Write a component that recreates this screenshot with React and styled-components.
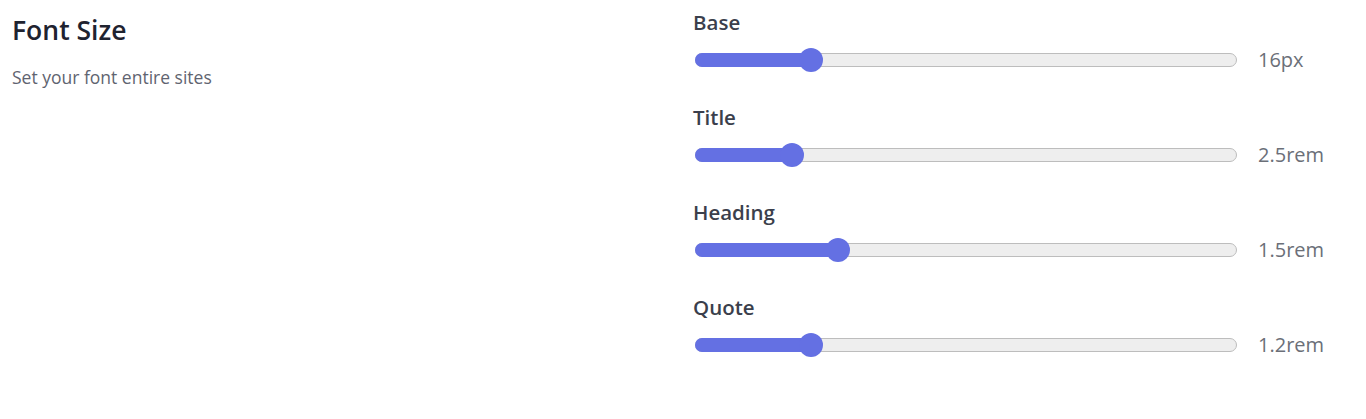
import React from "react";
import styled, { createGlobalStyle } from "styled-components";

const Global = createGlobalStyle`
  body {
    margin: 0;
    background: #fff;
    font-family: "Open Sans", "Noto Sans", sans-serif;
  }
`;

const Page = styled.div`
  display: grid;
  grid-template-columns: 669px 1fr;
  gap: 12px;
  padding: 8px 12px 0 12px;
`;

const Intro = styled.div`
  h2 {
    margin: 0;
    font-size: 26.5px;
    font-weight: 600;
    color: #1f2330;
    line-height: 44px;
  }
  p {
    margin: 13px 0 0;
    font-size: 17.5px;
    color: #5f6470;
  }
`;

const Controls = styled.div`
  display: flex;
  flex-direction: column;
  gap: 30px;
`;

const Field = styled.div`
  display: flex;
  flex-direction: column;
  gap: 10px;
`;

const Label = styled.label`
  font-size: 20.5px;
  font-weight: 600;
  color: #3b3f4c;
  line-height: 28px;
`;

const Row = styled.div`
  display: flex;
  align-items: center;
  gap: 21px;
  padding-left: 2px;
`;

const Track = styled.div`
  position: relative;
  flex: 1;
  height: 12px;
  border-radius: 7px;
  background: #eeeeee;
  border: 1px solid #bdbdbd;
`;

const Fill = styled.div`
  position: absolute;
  left: -1px;
  top: -1px;
  bottom: -1px;
  border-radius: 7px;
  background: #6470e3;
`;

const Thumb = styled.div`
  position: absolute;
  top: 50%;
  width: 24px;
  height: 24px;
  margin-left: -12px;
  margin-top: -12px;
  border-radius: 50%;
  background: #6470e3;
`;

const Value = styled.span`
  width: 96px;
  font-size: 20px;
  color: #6b6f78;
`;

const sliders = [
  { label: "Base", value: "16px", pos: 0.2 },
  { label: "Title", value: "2.5rem", pos: 0.165 },
  { label: "Heading", value: "1.5rem", pos: 0.252 },
  { label: "Quote", value: "1.2rem", pos: 0.2 },
];

function Slider({ pos }) {
  const x = `calc(11px + (100% - 22px) * ${pos})`;
  return (
    <Track>
      <Fill style={{ width: x }} />
      <Thumb style={{ left: x }} />
    </Track>
  );
}

export default function App() {
  return (
    <>
      <Global />
      <Page>
        <Intro>
          <h2>Font Size</h2>
          <p>Set your font entire sites</p>
        </Intro>
        <Controls>
          {sliders.map((s) => (
            <Field key={s.label}>
              <Label>{s.label}</Label>
              <Row>
                <Slider pos={s.pos} />
                <Value>{s.value}</Value>
              </Row>
            </Field>
          ))}
        </Controls>
      </Page>
    </>
  );
}
